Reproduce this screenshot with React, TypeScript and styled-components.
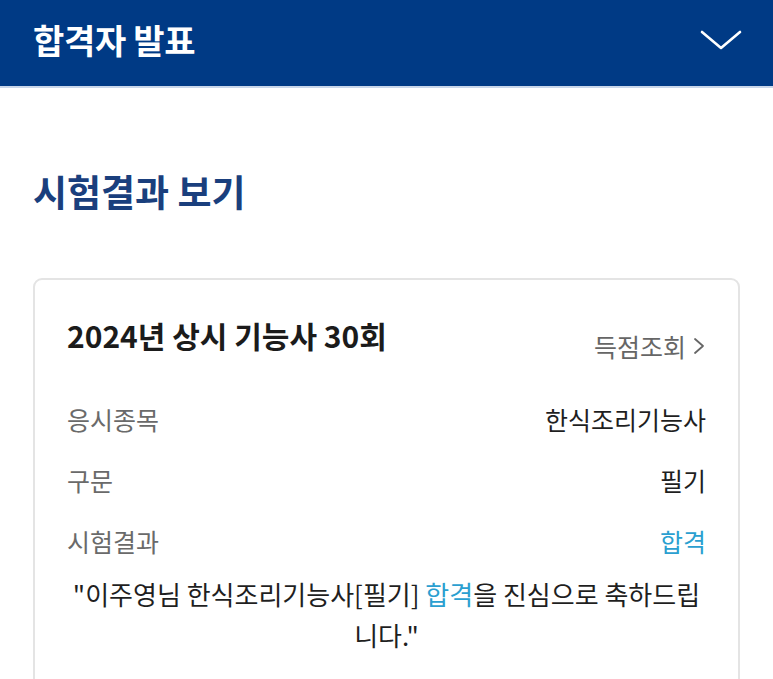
import React, { FC } from "react";
import styled, { createGlobalStyle } from "styled-components";

const GlobalStyle = createGlobalStyle`
  html, body {
    margin: 0;
    padding: 0;
    background: #ffffff;
    font-family: "Noto Sans CJK KR", "Noto Sans", sans-serif;
  }
`;

type Row = { label: string; value: string; highlight?: boolean };

const rows: Row[] = [
  { label: "응시종목", value: "한식조리기능사" },
  { label: "구문", value: "필기" },
  { label: "시험결과", value: "합격", highlight: true },
];

const App: FC = () => {
  return (
    <>
      <GlobalStyle />
      <Page>
        <TopBar>
          <TopTitle>합격자 발표</TopTitle>
          <Chevron width="42" height="22" viewBox="0 0 42 22" fill="none">
            <path d="M2 3 L21 19 L40 3" stroke="#ffffff" strokeWidth="2.6" strokeLinecap="round" strokeLinejoin="round" />
          </Chevron>
        </TopBar>
        <Content>
          <SectionTitle>시험결과 보기</SectionTitle>
          <Card>
            <CardHead>
              <CardTitle>2024년 상시 기능사 30회</CardTitle>
              <ScoreLink>
                득점조회
                <svg width="14" height="22" viewBox="0 0 14 22" fill="none">
                  <path d="M3 4 L11 11 L3 18" stroke="#666" strokeWidth="1.8" strokeLinecap="round" strokeLinejoin="round" />
                </svg>
              </ScoreLink>
            </CardHead>
            <InfoList>
              {rows.map((r) => (
                <InfoRow key={r.label}>
                  <Label>{r.label}</Label>
                  <Value $highlight={r.highlight}>{r.value}</Value>
                </InfoRow>
              ))}
            </InfoList>
            <Message>
              "이주영님 한식조리기능사[필기] <Pass>합격</Pass>을 진심으로 축하드립니다."
            </Message>
          </Card>
        </Content>
      </Page>
    </>
  );
};

const Page = styled.div`
  width: 100%;
  min-height: 679px;
  background: #fff;
`;

const TopBar = styled.header`
  height: 88px;
  background: #003a85;
  display: flex;
  align-items: center;
  justify-content: space-between;
  padding: 0 31px 0 33px;
  box-sizing: border-box;
  border-bottom: 2px solid #c9d6ea;
`;

const TopTitle = styled.h1`
  margin: 0 0 8px;
  color: #fff;
  font-size: 34px;
  font-weight: 700;
  letter-spacing: -0.3px;
`;

const Chevron = styled.svg`
  margin-bottom: 6px;
`;

const Content = styled.main`
  padding: 0 33px;
`;

const SectionTitle = styled.h2`
  margin: 0;
  padding: 78px 0 62px;
  color: #1a3f7d;
  font-size: 37px;
  font-weight: 700;
  line-height: 50px;
`;

const Card = styled.section`
  border: 2px solid #e4e4e4;
  border-radius: 9px;
  padding: 30px 32px 40px;
  min-height: 420px;
  box-sizing: border-box;
`;

const CardHead = styled.div`
  display: flex;
  justify-content: space-between;
  align-items: flex-start;
`;

const CardTitle = styled.h3`
  margin: 0;
  font-size: 30px;
  font-weight: 700;
  color: #1b1b1b;
  line-height: 50px;
`;

const ScoreLink = styled.a`
  display: flex;
  align-items: center;
  gap: 6px;
  margin-top: 16px;
  font-size: 25px;
  color: #666;
  line-height: 40px;
`;

const InfoList = styled.div`
  display: flex;
  flex-direction: column;
  margin-top: 22px;
`;

const InfoRow = styled.div`
  display: flex;
  justify-content: space-between;
  align-items: center;
  height: 61px;
`;

const Label = styled.span`
  font-size: 25px;
  color: #6a6a6a;
`;

const Value = styled.span<{ $highlight?: boolean }>`
  font-size: 25px;
  color: ${(p) => (p.$highlight ? "#2b9fd0" : "#1f1f1f")};
`;

const Message = styled.p`
  margin: 2px -2px 0;
  text-align: center;
  font-size: 26px;
  line-height: 41px;
  color: #1f1f1f;
`;

const Pass = styled.span`
  color: #2b9fd0;
`;

export default App;
